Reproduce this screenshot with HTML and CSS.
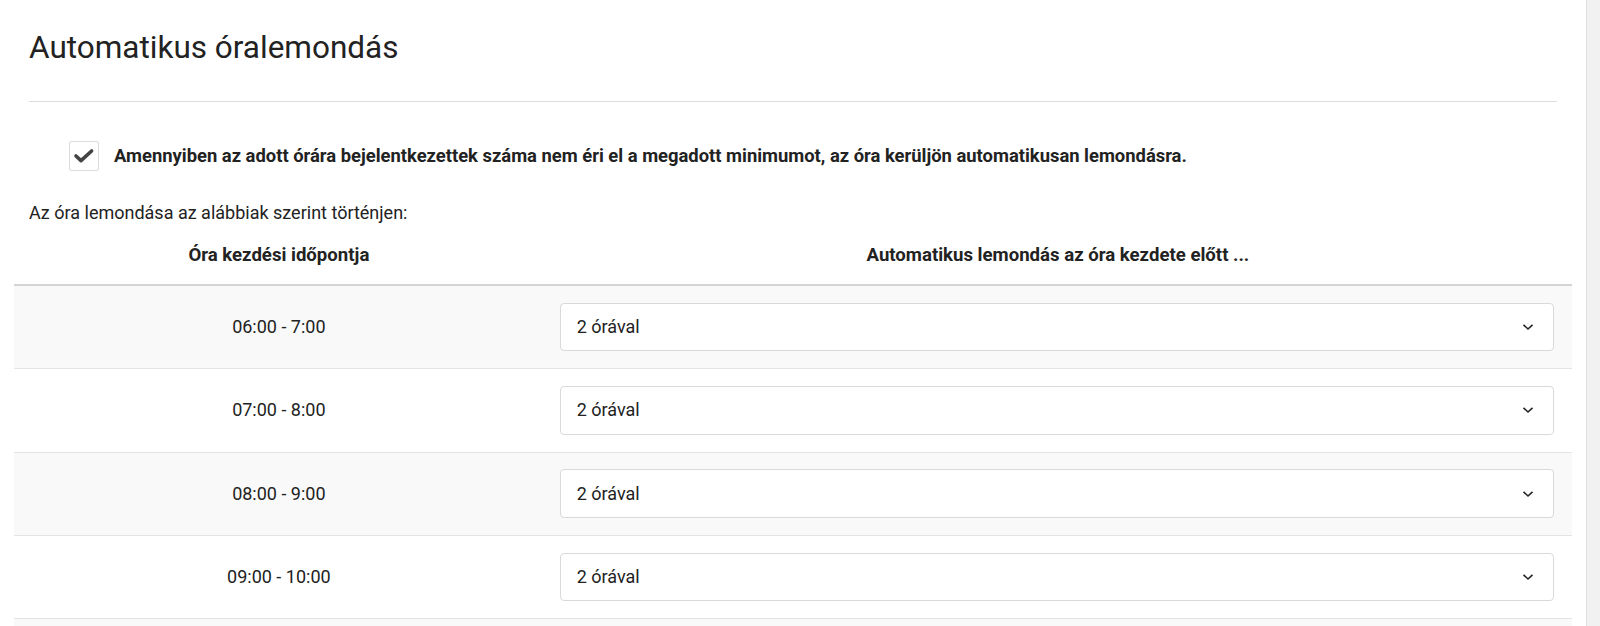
FILE: index.html
```html
<!DOCTYPE html>
<html lang="hu">
<head>
<meta charset="utf-8">
<title>Automatikus óralemondás</title>
<link rel="stylesheet" href="styles.css">
</head>
<body>
<div class="page">
  <main class="panel">
    <h1 class="title">Automatikus óralemondás</h1>
    <div class="divider"></div>
    <label class="check-row">
      <span class="checkbox">
        <svg width="22" height="16" viewBox="0 0 22 16"><path d="M3 8 L8 12.6 L18.6 3" fill="none" stroke="#444" stroke-width="3.6" stroke-linecap="round" stroke-linejoin="round"/></svg>
      </span>
      <span class="check-label">Amennyiben az adott órára bejelentkezettek száma nem éri el a megadott minimumot, az óra kerüljön automatikusan lemondásra.</span>
    </label>
    <p class="intro">Az óra lemondása az alábbiak szerint történjen:</p>
    <table class="schedule">
      <colgroup><col class="col-time"><col class="col-select"></colgroup>
      <thead>
        <tr><th>Óra kezdési időpontja</th><th>Automatikus lemondás az óra kezdete előtt ...</th></tr>
      </thead>
      <tbody>
        <tr><td class="time">06:00 - 7:00</td><td class="pick"><div class="select"><span>2 órával</span><svg class="chev" width="12" height="8" viewBox="0 0 12 8"><path d="M1.5 1.8 L6 6 L10.5 1.8" fill="none" stroke="#222" stroke-width="1.6"/></svg></div></td></tr>
        <tr><td class="time">07:00 - 8:00</td><td class="pick"><div class="select"><span>2 órával</span><svg class="chev" width="12" height="8" viewBox="0 0 12 8"><path d="M1.5 1.8 L6 6 L10.5 1.8" fill="none" stroke="#222" stroke-width="1.6"/></svg></div></td></tr>
        <tr><td class="time">08:00 - 9:00</td><td class="pick"><div class="select"><span>2 órával</span><svg class="chev" width="12" height="8" viewBox="0 0 12 8"><path d="M1.5 1.8 L6 6 L10.5 1.8" fill="none" stroke="#222" stroke-width="1.6"/></svg></div></td></tr>
        <tr><td class="time">09:00 - 10:00</td><td class="pick"><div class="select"><span>2 órával</span><svg class="chev" width="12" height="8" viewBox="0 0 12 8"><path d="M1.5 1.8 L6 6 L10.5 1.8" fill="none" stroke="#222" stroke-width="1.6"/></svg></div></td></tr>
        <tr class="peek"><td class="time"></td><td></td></tr>
      </tbody>
    </table>
  </main>
  <div class="scrollbar"></div>
</div>
</body>
</html>
```

FILE: styles.css
```css
html, body {
  margin: 0;
  padding: 0;
  background: #fff;
}
body {
  font-family: Roboto, "Liberation Sans", Arial, sans-serif;
  color: #222;
  font-size: 18px;
  line-height: 24px;
  overflow: hidden;
}
.page {
  display: flex;
  height: 626px;
  overflow: hidden;
}
.panel {
  flex: 1;
  padding: 0 14px;
  min-width: 0;
}
.scrollbar {
  width: 13px;
  background: #f1f1f1;
  border-left: 1px solid #e2e2e2;
}
.title {
  margin: 0;
  padding: 29px 15px 0;
  font-size: 31.5px;
  font-weight: 400;
  line-height: 38px;
  color: #222;
}
.divider {
  margin: 34px 15px 0;
  height: 1px;
  background: #dcdcdc;
}
.check-row {
  display: flex;
  align-items: center;
  margin-top: 39px;
  padding-left: 55px;
}
.checkbox {
  width: 28px;
  height: 28px;
  border: 1px solid #dcdcdc;
  border-radius: 2px;
  display: flex;
  align-items: center;
  justify-content: center;
  flex: none;
}
.check-label {
  margin-left: 15px;
  font-weight: 700;
  font-size: 18.4px;
  color: #222;
}
.intro {
  margin: 30px 0 0;
  padding-left: 15px;
}
.schedule {
  width: 100%;
  border-collapse: collapse;
  margin-top: 0;
}
.col-time { width: 34%; }
.schedule th {
  font-weight: 700;
  font-size: 18.6px;
  text-align: center;
  padding: 18px 15px 17px;
  border-bottom: 2px solid #d4d4d4;
}
.schedule td {
  padding: 16.8px 15px 17px;
  border-bottom: 1px solid #e4e4e4;
}
.schedule td.pick {
  padding-left: 16px;
  padding-right: 18px;
}
.schedule tbody tr:nth-child(odd) td {
  background: #f9f9f9;
}
.schedule tr.peek td {
  height: 48px;
}
.schedule td.time {
  text-align: center;
}
.select {
  height: 46.5px;
  border: 1px solid #d9d9d9;
  border-radius: 4px;
  background: #fff;
  display: flex;
  align-items: center;
  justify-content: space-between;
  padding: 0 19px 0 16px;
}
.chev { display: block; }
```
